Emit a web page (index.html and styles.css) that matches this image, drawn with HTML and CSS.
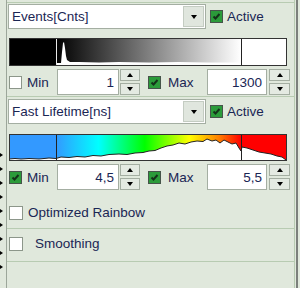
FILE: index.html
```html
<!DOCTYPE html>
<html lang="en">
<head>
  <meta charset="UTF-8">
  <title>Histogram settings</title>
  <link rel="stylesheet" href="styles.css">
</head>
<body>

<div class="frame">
  <div class="rail">
    <span class="tick"></span><span class="tick"></span><span class="tick"></span>
    <span class="tick"></span><span class="tick"></span><span class="tick"></span>
    <span class="tick"></span><span class="tick"></span><span class="tick"></span>
  </div>

  <div class="panel">
    <div class="group first">
      <div class="head">
        <div class="combo">
          <span class="combo-text">Events[Cnts]</span>
          <span class="drop"><span class="tri-down"></span></span>
        </div>
        <span class="box on"><svg width="11" height="11" viewBox="0 0 11 11"><path d="M2.5 5.5 L4.5 7.5 L8.5 3" fill="none" stroke="#14321a" stroke-width="2"/></svg></span>
        <span class="label">Active</span>
      </div>

      <svg class="hist" width="278" height="28" viewBox="0 0 278 28">
        <defs>
          <linearGradient id="gray" x1="0" x2="1">
            <stop offset="0" stop-color="#000"/>
            <stop offset="1" stop-color="#fff"/>
          </linearGradient>
        </defs>
        <rect x="0" y="0" width="47" height="28" fill="#000"/>
        <rect x="47" y="0" width="185" height="28" fill="url(#gray)"/>
        <rect x="232" y="0" width="46" height="28" fill="#fff"/>
        <polygon fill="#fff" points="48,28 48,25 52,25 53,14 54,5 55,4 56,10 57,18 58,22 61,24 70,24 90,24.5 110,24 140,24.5 170,24 200,24.5 232,24.5 232,28"/>
        <line x1="47.5" y1="0" x2="47.5" y2="28" stroke="#e8e8e8"/>
        <line x1="232.5" y1="0" x2="232.5" y2="28" stroke="#222"/>
        <rect x="0.5" y="0.5" width="277" height="27" fill="none" stroke="#333"/>
      </svg>

      <div class="range">
        <span class="box"></span>
        <span class="label min">Min</span>
        <div class="field small"><span>1</span></div>
        <div class="spin"><span class="btn"><span class="tri-up"></span></span><span class="btn"><span class="tri-down"></span></span></div>
        <span class="box on gap"><svg width="11" height="11" viewBox="0 0 11 11"><path d="M2.5 5.5 L4.5 7.5 L8.5 3" fill="none" stroke="#14321a" stroke-width="2"/></svg></span>
        <span class="label max">Max</span>
        <div class="field"><span>1300</span></div>
        <div class="spin wide"><span class="btn"><span class="tri-up"></span></span><span class="btn"><span class="tri-down"></span></span></div>
      </div>
    </div>

    <div class="group second">
      <div class="head">
        <div class="combo">
          <span class="combo-text">Fast Lifetime[ns]</span>
          <span class="drop"><span class="tri-down"></span></span>
        </div>
        <span class="box on"><svg width="11" height="11" viewBox="0 0 11 11"><path d="M2.5 5.5 L4.5 7.5 L8.5 3" fill="none" stroke="#14321a" stroke-width="2"/></svg></span>
        <span class="label">Active</span>
      </div>

      <svg class="hist tall" width="278" height="27" viewBox="0 0 278 27">
        <defs>
          <linearGradient id="rainbow" x1="0" x2="1">
            <stop offset="0" stop-color="#3399ff"/>
            <stop offset="0.23" stop-color="#00ffff"/>
            <stop offset="0.48" stop-color="#00ff00"/>
            <stop offset="0.72" stop-color="#ffff00"/>
            <stop offset="0.88" stop-color="#ff8000"/>
            <stop offset="1" stop-color="#ff0000"/>
          </linearGradient>
        </defs>
        <rect x="0" y="0" width="47" height="27" fill="#3399ff"/>
        <rect x="47" y="0" width="185" height="27" fill="url(#rainbow)"/>
        <rect x="232" y="0" width="46" height="27" fill="#ff0000"/>
        <polyline fill="#fff" stroke="#222" stroke-width="1" points="0,25 6,24.5 12,25 20,24.5 30,25 40,24 47,24.5 52,23 60,23.5 68,22.5 76,23 84,21.5 92,22 100,20.5 110,20 118,20.5 126,19 134,18.5 140,17 146,16.5 152,14 158,12 164,11 170,9 176,10 182,8 188,7 194,7.5 198,5 203,7 207,6 211,9 215,6 219,8 223,10 227,9 230,14 232,17 233,13 238,14 244,16 250,18 256,19 262,20 268,22 273,23 277,26 277,27 0,27"/>
        <line x1="47.5" y1="0" x2="47.5" y2="27" stroke="#222"/>
        <line x1="232.5" y1="0" x2="232.5" y2="27" stroke="#222"/>
        <rect x="0.5" y="0.5" width="277" height="26" fill="none" stroke="#333"/>
      </svg>

      <div class="range">
        <span class="box on"><svg width="11" height="11" viewBox="0 0 11 11"><path d="M2.5 5.5 L4.5 7.5 L8.5 3" fill="none" stroke="#14321a" stroke-width="2"/></svg></span>
        <span class="label min">Min</span>
        <div class="field small"><span>4,5</span></div>
        <div class="spin"><span class="btn"><span class="tri-up"></span></span><span class="btn"><span class="tri-down"></span></span></div>
        <span class="box on gap"><svg width="11" height="11" viewBox="0 0 11 11"><path d="M2.5 5.5 L4.5 7.5 L8.5 3" fill="none" stroke="#14321a" stroke-width="2"/></svg></span>
        <span class="label max">Max</span>
        <div class="field"><span>5,5</span></div>
        <div class="spin wide"><span class="btn"><span class="tri-up"></span></span><span class="btn"><span class="tri-down"></span></span></div>
      </div>
    </div>

    <div class="option rainbow">
      <span class="box"></span>
      <span class="label">Optimized Rainbow</span>
    </div>
    <div class="option smooth">
      <span class="box"></span>
      <span class="label">Smoothing</span>
    </div>
  </div>

  <div class="edge"></div>
</div>

</body>
</html>
```

FILE: styles.css
```css
body { margin: 0; background: #e0e8dc; font-family: "Liberation Sans", Arial, sans-serif; font-size: 13.5px; color: #1a2654; }

.frame { display: flex; width: 300px; height: 288px; overflow: hidden; }

.rail {
  width: 7px;
  border-right: 1px solid #9ca69a;
  display: flex;
  flex-direction: column;
  gap: 10px;
  padding-top: 153px;
  box-sizing: border-box;
  flex: none;
}
.tick {
  width: 0;
  height: 0;
  border-top: 2.5px solid transparent;
  border-bottom: 2.5px solid transparent;
  border-left: 3px solid #000;
}

.panel { width: 287px; border-right: 1px solid #b8cbb2; flex: none; }
.edge { width: 2px; margin-left: 1px; background: #7c807c; flex: none; }

.group { border-bottom: 1px solid #b8cbb2; }
.first { border-top: 1px solid #b8cbb2; margin-top: 2px; padding-top: 1px; padding-bottom: 1px; }
.second { padding-top: 2px; border-bottom: none; }

.head { display: flex; align-items: center; height: 25px; }
.combo {
  width: 198px;
  height: 25px;
  box-sizing: border-box;
  margin-left: 1px;
  background: #fff;
  border: 1px solid #a4aea2;
  display: flex;
  align-items: center;
  justify-content: space-between;
}
.combo-text { padding-left: 3px; }
.drop {
  width: 19px;
  height: 19px;
  margin-right: 1px;
  background: #e0e6de;
  border: 1px solid #c4ccc2;
  display: flex;
  align-items: center;
  justify-content: center;
}

.tri-down, .tri-up {
  width: 0;
  height: 0;
  border-left: 3.5px solid transparent;
  border-right: 3.5px solid transparent;
}
.tri-down { border-top: 4px solid #000; }
.tri-up { border-bottom: 4px solid #000; }

.box {
  width: 13px;
  height: 13px;
  box-sizing: border-box;
  border: 1px solid #8c968a;
  background: #fff;
  flex: none;
  display: flex;
  align-items: center;
  justify-content: center;
}
.box.on { background: #2b9b3a; border-color: #46544a; }
.head .box { margin-left: 4px; }
.head .label { margin-left: 4px; }

.hist { display: block; margin: 9px 0 0 2px; }
.hist.tall { margin-top: 10px; }

.range { display: flex; align-items: center; height: 26px; margin-top: 3px; padding-left: 2px; }
.range .box { margin-left: 0; }
.min { width: 30px; margin-left: 5px; }
.max { width: 39px; margin-left: 7px; }
.box.gap { margin-left: 8px; }

.field {
  width: 60px;
  height: 26px;
  box-sizing: border-box;
  background: #fff;
  border: 1px solid #a4aea2;
  display: flex;
  align-items: center;
  justify-content: flex-end;
  padding-right: 4px;
}
.field.small { width: 62px; }

.spin { width: 20px; height: 26px; margin-left: 1px; display: flex; flex-direction: column; justify-content: space-between; }
.spin.wide { width: 21px; margin-left: 2px; }
.btn {
  height: 12px;
  box-sizing: border-box;
  background: #e4eae2;
  border: 1px solid #a4aea2;
  display: flex;
  align-items: center;
  justify-content: center;
}

.option { display: flex; align-items: center; border-bottom: 1px solid #b8cbb2; padding-left: 2px; }
.option .box { width: 14px; height: 14px; }
.rainbow { padding-top: 15px; padding-bottom: 8px; }
.rainbow .label { margin-left: 5px; }
.smooth { padding-top: 7px; padding-bottom: 10px; }
.smooth .label { margin-left: 12px; }
```
